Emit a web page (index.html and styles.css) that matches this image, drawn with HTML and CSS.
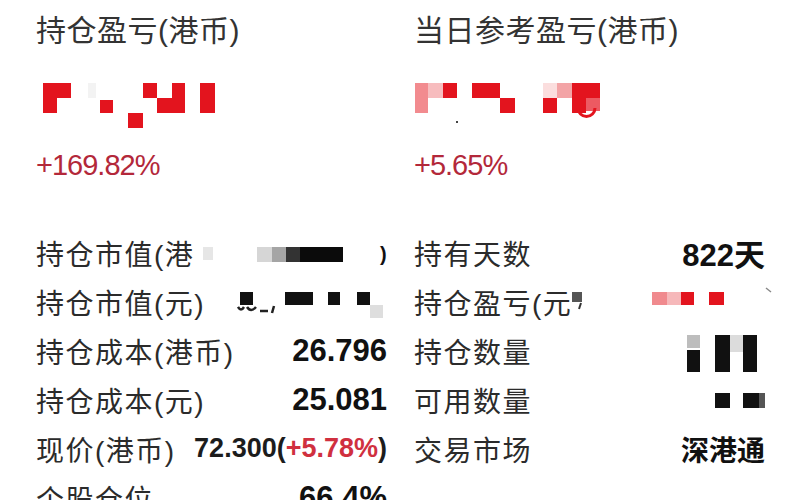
FILE: index.html
```html
<!DOCTYPE html>
<html lang="zh-CN">
<head>
<meta charset="utf-8">
<title>持仓详情</title>
<link rel="stylesheet" href="styles.css">
</head>
<body>
<main class="panel">
  <section class="col">
    <h2 class="title">持仓盈亏(港币)</h2>
    <svg class="mosaic" width="200" height="50" viewBox="0 0 200 50" aria-hidden="true">
      <g fill="#e3141e">
        <rect x="7" y="3" width="28" height="15"/>
        <rect x="7" y="3" width="14" height="30"/>
        <rect x="64" y="20" width="13" height="13"/>
        <rect x="92" y="33" width="15" height="15"/>
        <rect x="107" y="3" width="14" height="15"/>
        <rect x="121" y="18" width="28" height="15"/>
        <rect x="136" y="3" width="13" height="15"/>
        <rect x="164" y="3" width="15" height="30"/>
      </g>
      <rect x="52" y="3" width="8" height="15" fill="#f3f3f3"/>
    </svg>
    <div class="pct">+169.82%</div>
    <div class="rows">
      <div class="row">
        <span class="label">持仓市值(港</span>
        <svg class="blur" width="186" height="49" viewBox="0 0 186 49" aria-hidden="true">
          <rect x="2" y="19" width="10" height="13" fill="#e6e6e6"/>
          <rect x="56" y="19" width="15" height="15" fill="#d6d6d6"/>
          <rect x="71" y="19" width="14" height="15" fill="#a5a5a5"/>
          <rect x="85" y="19" width="14" height="15" fill="#333"/>
          <rect x="99" y="19" width="43" height="15" fill="#0b0b0b"/>
          <text x="179" y="33" class="frag">)</text>
        </svg>
      </div>
      <div class="row">
        <span class="label">持仓市值(元)</span>
        <svg class="blur" width="150" height="49" viewBox="0 0 150 49" aria-hidden="true">
          <rect x="3" y="15" width="13" height="13" fill="#111"/>
          <path d="M1 30 q3 5 6 0 M10 30 q4 6 9 0 M23 34 h8 M37 29 l-2 7" stroke="#222" stroke-width="2.5" fill="none"/>
          <rect x="48" y="15" width="28" height="13" fill="#111"/>
          <rect x="91" y="15" width="12" height="13" fill="#111"/>
          <rect x="120" y="15" width="13" height="13" fill="#111"/>
          <rect x="133" y="28" width="13" height="13" fill="#dedede"/>
        </svg>
      </div>
      <div class="row">
        <span class="label">持仓成本(港币)</span>
        <span class="value">26.796</span>
      </div>
      <div class="row">
        <span class="label">持仓成本(元)</span>
        <span class="value">25.081</span>
      </div>
      <div class="row">
        <span class="label">现价(港币)</span>
        <span class="price">72.300(<em class="up">+5.78%</em>)</span>
      </div>
      <div class="row">
        <span class="label">个股仓位</span>
        <span class="value">66.4%</span>
      </div>
    </div>
  </section>

  <section class="col">
    <h2 class="title">当日参考盈亏(港币)</h2>
    <svg class="mosaic" width="200" height="50" viewBox="0 0 200 50" aria-hidden="true">
      <rect x="1" y="3" width="13" height="30" fill="#f28b8f"/>
      <rect x="14" y="3" width="15" height="15" fill="#f7bcbe"/>
      <rect x="129" y="3" width="14" height="15" fill="#fbdede"/>
      <rect x="143" y="3" width="15" height="15" fill="#f3a4a6"/>
      <g fill="#e3141e">
        <rect x="29" y="3" width="14" height="15"/>
        <rect x="58" y="3" width="28" height="15"/>
        <rect x="86" y="18" width="15" height="15"/>
        <rect x="129" y="18" width="14" height="15"/>
        <rect x="158" y="3" width="28" height="15"/>
        <rect x="158" y="18" width="14" height="15"/>
      </g>
      <rect x="172" y="18" width="14" height="13" fill="#ec5a62"/>
      <path d="M164 28 A 8.5 8.5 0 0 0 181 28" stroke="#e3141e" stroke-width="3" fill="none"/>
      <rect x="42" y="41" width="2" height="2" fill="#444"/>
    </svg>
    <div class="pct">+5.65%</div>
    <div class="rows">
      <div class="row">
        <span class="label">持有天数</span>
        <span class="value">822天</span>
      </div>
      <div class="row">
        <span class="label">持仓盈亏(元</span>
        <svg class="blur" width="200" height="49" viewBox="0 0 200 49" aria-hidden="true">
          <rect x="0" y="15" width="10" height="10" fill="#555"/>
          <path d="M9 26 l-2 6" stroke="#333" stroke-width="2" fill="none"/>
          <rect x="80" y="15" width="15" height="13" fill="#f08a8e"/>
          <rect x="95" y="15" width="14" height="13" fill="#f6b8ba"/>
          <rect x="109" y="15" width="13" height="13" fill="#e3141e"/>
          <rect x="137" y="15" width="15" height="13" fill="#e3141e"/>
          <path d="M194 11 l5 4" stroke="#888" stroke-width="1.5" fill="none"/>
        </svg>
      </div>
      <div class="row">
        <span class="label">持仓数量</span>
        <svg class="blur" width="85" height="49" viewBox="0 0 85 49" aria-hidden="true">
          <rect x="7" y="9" width="13" height="13" fill="#bdbdbd"/>
          <rect x="7" y="24" width="13" height="22" fill="#111"/>
          <rect x="35" y="9" width="15" height="37" fill="#111"/>
          <rect x="50" y="9" width="13" height="17" fill="#dcdcdc"/>
          <rect x="63" y="9" width="14" height="37" fill="#111"/>
        </svg>
      </div>
      <div class="row">
        <span class="label">可用数量</span>
        <svg class="blur" width="65" height="49" viewBox="0 0 65 49" aria-hidden="true">
          <rect x="15" y="18" width="15" height="15" fill="#111"/>
          <rect x="43" y="18" width="16" height="15" fill="#111"/>
          <rect x="59" y="18" width="6" height="15" fill="#555"/>
        </svg>
      </div>
      <div class="row">
        <span class="label">交易市场</span>
        <span class="market">深港通</span>
      </div>
    </div>
  </section>
</main>
</body>
</html>
```

FILE: styles.css
```css
html, body {
  margin: 0;
  padding: 0;
  height: 500px;
  overflow: hidden;
  background: #ffffff;
}

body {
  font-family: "Liberation Sans", "Noto Sans CJK SC", sans-serif;
  color: #2f2f2f;
}

.panel {
  display: grid;
  grid-template-columns: 351px 351px;
  column-gap: 27px;
  padding: 11px 0 0 36px;
}

.col {
  display: flex;
  flex-direction: column;
  min-width: 0;
}

.title {
  margin: 0;
  font-size: 30px;
  font-weight: 400;
  line-height: 40px;
  letter-spacing: 0.5px;
  color: #333;
  white-space: nowrap;
}

.mosaic {
  display: block;
  margin-top: 29px;
}

.pct {
  margin-top: 18px;
  font-size: 29px;
  line-height: 34px;
  letter-spacing: -1px;
  color: #b3283a;
}

.rows {
  margin-top: 46px;
  display: flex;
  flex-direction: column;
}

.row {
  display: flex;
  align-items: center;
  justify-content: space-between;
  height: 49px;
}

.label {
  font-size: 28px;
  letter-spacing: 1.5px;
  color: #2b2b2b;
  white-space: nowrap;
}

.value {
  font-size: 31px;
  font-weight: 700;
  color: #111;
  white-space: nowrap;
}

.price {
  font-size: 27px;
  font-weight: 700;
  color: #1c1c1c;
  white-space: nowrap;
}

.up {
  font-style: normal;
  color: #d0303f;
}

.market {
  font-family: "Noto Sans CJK SC", sans-serif;
  font-size: 28px;
  font-weight: 700;
  color: #111;
}

.blur {
  display: block;
  flex-shrink: 0;
}

.frag {
  font-family: "Liberation Sans", sans-serif;
  font-size: 20px;
  font-weight: 700;
  fill: #111;
}
```
